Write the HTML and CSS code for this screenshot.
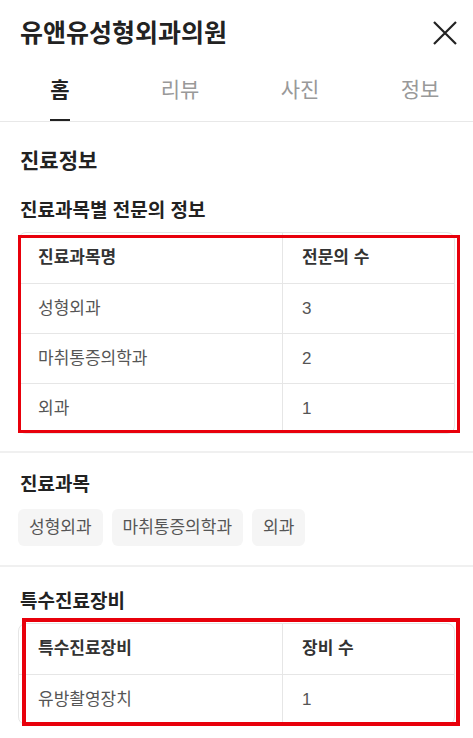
FILE: index.html
```html
<!DOCTYPE html>
<html lang="ko">
<head>
  <meta charset="utf-8">
  <meta name="viewport" content="width=device-width, initial-scale=1">
  <title>유앤유성형외과의원</title>
  <link rel="stylesheet" href="styles.css">
</head>
<body>
  <div class="header">
    <h1 class="title">유앤유성형외과의원</h1>
    <button class="close" aria-label="닫기">
      <svg width="24" height="24" viewBox="0 0 24 24"><path d="M1 1L23 23M23 1L1 23" stroke="#222" stroke-width="2.2" fill="none"/></svg>
    </button>
  </div>
  <nav class="tabs">
    <div class="tab active"><span>홈</span></div>
    <div class="tab"><span>리뷰</span></div>
    <div class="tab"><span>사진</span></div>
    <div class="tab"><span>정보</span></div>
  </nav>

  <section class="section">
    <h2 class="section-title">진료정보</h2>
    <h3 class="sub-title">진료과목별 전문의 정보</h3>
    <div class="table-wrap">
      <table class="info-table">
        <thead>
          <tr><th>진료과목명</th><th>전문의 수</th></tr>
        </thead>
        <tbody>
          <tr><td>성형외과</td><td>3</td></tr>
          <tr><td>마취통증의학과</td><td>2</td></tr>
          <tr><td>외과</td><td>1</td></tr>
        </tbody>
      </table>
      <div class="mark mark-1"></div>
    </div>
  </section>

  <section class="section subjects">
    <h3 class="sub-title">진료과목</h3>
    <div class="chips">
      <span class="chip">성형외과</span>
      <span class="chip">마취통증의학과</span>
      <span class="chip">외과</span>
    </div>
  </section>

  <section class="section last">
    <h3 class="sub-title">특수진료장비</h3>
    <div class="table-wrap">
      <table class="info-table">
        <thead>
          <tr><th>특수진료장비</th><th>장비 수</th></tr>
        </thead>
        <tbody>
          <tr><td>유방촬영장치</td><td>1</td></tr>
        </tbody>
      </table>
      <div class="mark mark-2"></div>
    </div>
  </section>
</body>
</html>
```

FILE: styles.css
```css
/* Base */
*, ::before, ::after {
  box-sizing: border-box;
  margin: 0;
  padding: 0;
}
html {
  background: #fff;
}
body {
  font-family: "Liberation Sans", "Noto Sans CJK KR", sans-serif;
  color: #222;
  overflow-x: hidden;
}

/* Header */
.header {
  display: flex;
  align-items: center;
  justify-content: space-between;
  height: 66px;
  padding: 0 16px 0 20px;
}
.title {
  font-size: 25px;
  font-weight: 700;
  line-height: 30px;
}
.close {
  border: none;
  background: none;
  width: 24px;
  height: 24px;
  display: flex;
  cursor: pointer;
}

/* Tabs */
.tabs {
  display: grid;
  grid-template-columns: repeat(4, 120px);
  border-bottom: 1px solid #e8e8e8;
}
.tab {
  height: 55px;
  padding-top: 13px;
  text-align: center;
  font-size: 21px;
  line-height: 22px;
  color: #999;
}
.tab span {
  display: inline-block;
  height: 100%;
}
.tab.active {
  color: #222;
  font-weight: 700;
}
.tab.active span {
  border-bottom: 2px solid #222;
}

/* Sections */
.section {
  padding: 19px 18px 17px;
  border-bottom: 2px solid #f0f0f0;
}
.section:first-of-type {
  padding-top: 25px;
}
.section.subjects {
  padding-bottom: 19px;
}
.section.last {
  padding-top: 22px;
  border-bottom: none;
}
.section-title {
  font-size: 21px;
  font-weight: 700;
  line-height: 28px;
  padding-left: 2px;
  margin-bottom: 23px;
}
.sub-title {
  font-size: 19px;
  font-weight: 700;
  line-height: 26px;
  padding-left: 2px;
}

/* Tables */
.table-wrap {
  position: relative;
  margin-top: 8px;
}
.info-table {
  width: 100%;
  border-collapse: separate;
  border-spacing: 0;
  table-layout: fixed;
  border: 1px solid #e6e6e6;
  border-radius: 8px;
  font-size: 17px;
}
.info-table th,
.info-table td {
  height: 50px;
  padding: 0 19px;
  text-align: left;
  vertical-align: middle;
  line-height: 20px;
}
.info-table th:first-child,
.info-table td:first-child {
  width: 264px;
  border-right: 1px solid #e6e6e6;
}
.info-table th {
  font-weight: 700;
  color: #333;
}
.info-table td {
  color: #555;
  border-top: 1px solid #e6e6e6;
}

/* Highlight boxes */
.mark {
  position: absolute;
  border: 3px solid #e8000b;
  pointer-events: none;
}
.mark-1 {
  top: 3px;
  left: 0;
  right: -5px;
  bottom: 1px;
}
.mark-2 {
  top: -5px;
  left: 4px;
  right: -5px;
  bottom: -1px;
  border-width: 4px;
}

/* Chips */
.chips {
  display: flex;
  gap: 9px;
  margin-top: 11px;
}
.chip {
  background: #f5f5f5;
  border-radius: 6px;
  padding: 8px 11px;
  font-size: 17px;
  line-height: 21px;
  color: #555;
}
```
